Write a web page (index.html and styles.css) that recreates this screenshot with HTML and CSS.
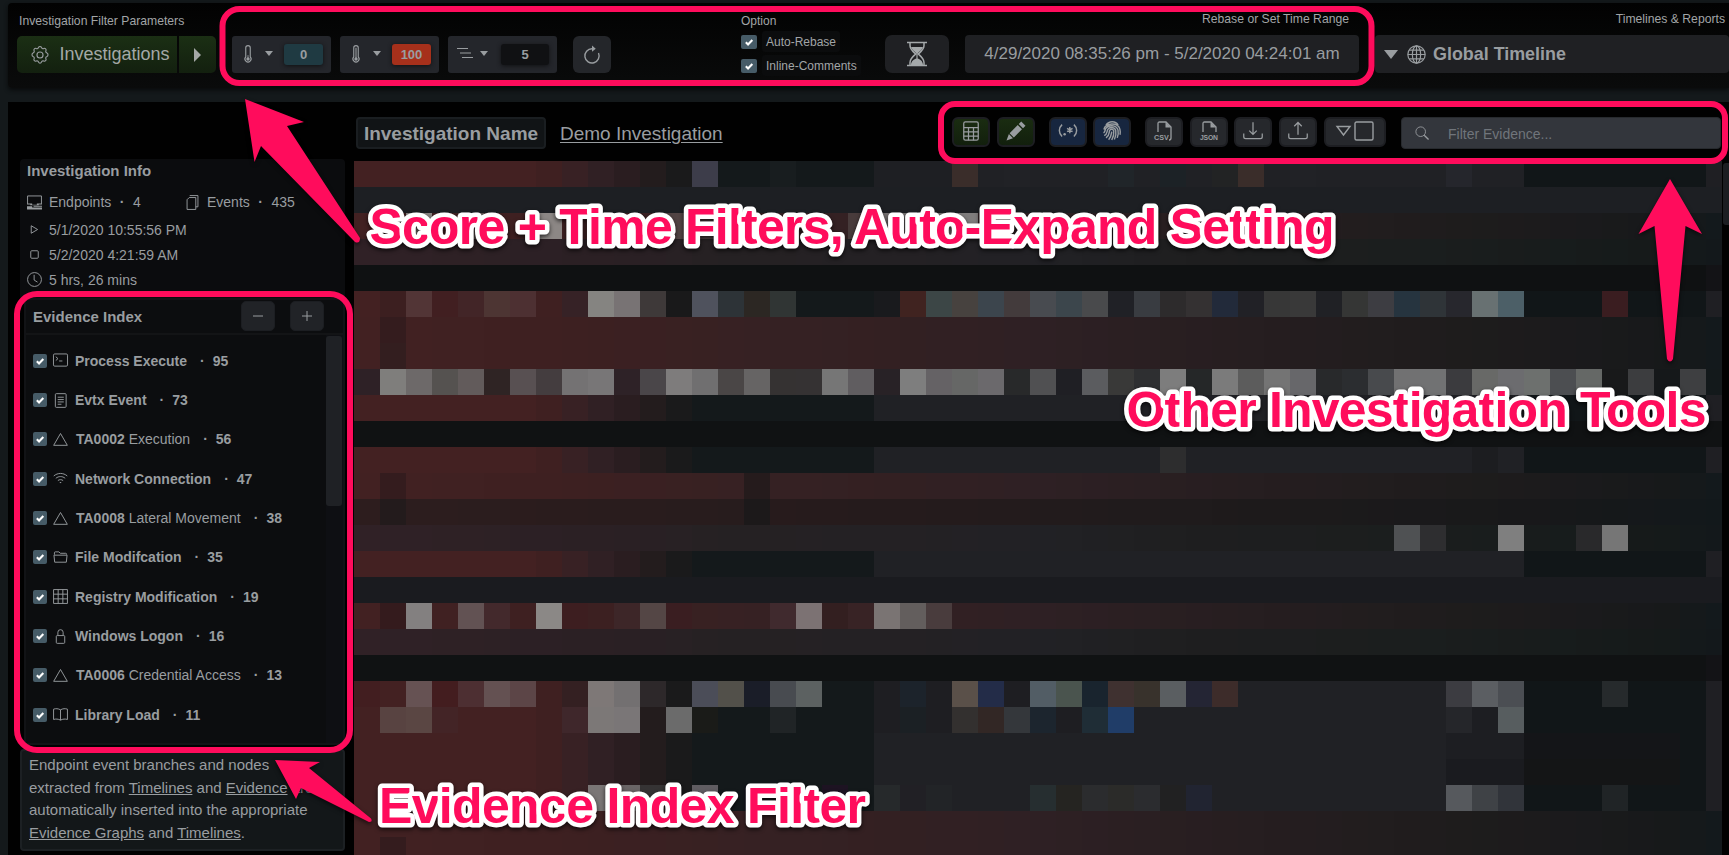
FILE: index.html
```html
<!DOCTYPE html>
<html lang="en">
<head>
<meta charset="utf-8">
<title>Demo Investigation</title>
<link rel="stylesheet" href="styles.css">
</head>
<body>
<svg class="defs" width="0" height="0">
  <symbol id="check" viewBox="0 0 16 16"><path d="M4.4 8.3l2.5 2.5 4.9-5.1" fill="none" stroke="#fff" stroke-width="2.4"/></symbol>
  <symbol id="tri" viewBox="0 0 16 16"><path d="M8 1.6L15.3 14.2H.7z"/></symbol>
</svg>

<header class="topbar">
  <div class="group group-inv">
    <div class="label">Investigation Filter Parameters</div>
    <div class="split">
      <button class="split-main">
        <svg class="icon" width="18" height="18" viewBox="0 0 16 16"><circle cx="8" cy="8" r="2.7"/><path d="M6.7 1.3C7.1.2 8.9.2 9.3 1.3c.3 1 1.2 1.4 2.1.9 1.1-.6 2.5.8 1.9 1.9-.5.9-.1 1.8.9 2.1 1.2.4 1.2 2.8 0 3.2-1 .3-1.4 1.2-.9 2.1.6 1.1-.8 2.5-1.9 1.9-.9-.5-1.8-.1-2.1.9-.4 1.2-2.2 1.2-2.600 0-.3-1-1.200-1.400-2.100-.9-1.100.6-2.500-.8-1.900-1.900.5-.9.1-1.800-.9-2.100-1.200-.4-1.200-2.800 0-3.200 1-.3 1.400-1.200.9-2.100-.6-1.100.8-2.500 1.900-1.900.9.5 1.800.1 2.100-.9z"/></svg>
        <span>Investigations</span>
      </button>
      <button class="split-more"><i class="caret-right"></i></button>
    </div>
  </div>

  <div class="filters">
    <div class="pill">
      <svg class="icon" width="18" height="18" viewBox="0 0 16 16"><path d="M6 10.500V2.500a2 2 0 0 1 4 0v8a2.700 2.700 0 1 1-4 0z"/><path d="M8 9v3" stroke-width=".8"/><circle class="solid" cx="8" cy="12.400" r="1.500"/></svg>
      <i class="caret"></i><span class="badge teal">0</span>
    </div>
    <div class="pill">
      <svg class="icon" width="18" height="18" viewBox="0 0 16 16"><path d="M6 10.500V2.500a2 2 0 0 1 4 0v8a2.700 2.700 0 1 1-4 0zM8 2.500v9"/><circle class="solid" cx="8" cy="12.400" r="1.500"/></svg>
      <i class="caret"></i><span class="badge red">100</span>
    </div>
    <div class="pill wide">
      <svg class="icon" width="16" height="16" viewBox="0 0 16 16"><path d="M0 2.500h11M3 7h11M5 11.500h11" stroke-width="1.200"/></svg>
      <i class="caret"></i><span class="badge dark">5</span>
    </div>
    <button class="reload">
      <svg class="icon" width="20" height="20" viewBox="0 0 16 16"><path d="M8 3a5.700 5.700 0 1 0 5.200 3.400" stroke-width="1.100"/><path class="solid" d="M8 .4v5L11 2.900z"/></svg>
    </button>
  </div>

  <div class="options">
    <div class="label">Option</div>
    <label class="opt"><span class="cb"><svg width="16" height="14"><use href="#check"/></svg></span><span class="opt-text">Auto-Rebase</span></label>
    <label class="opt"><span class="cb"><svg width="16" height="14"><use href="#check"/></svg></span><span class="opt-text">Inline-Comments</span></label>
  </div>

  <button class="hourglass">
    <svg width="22" height="26" viewBox="0 0 22 26" fill="none" stroke="#a4a8aa" stroke-width="1.500"><path d="M1 1.500h20M1 24.500h20M4 1.500v3c0 4 3 6 5.800 8.500C7 15.500 4 17.500 4 21.500v3M18 1.500v3c0 4-3 6-5.800 8.500C15 15.500 18 17.500 18 21.500v3"/><path d="M5 6h12c-1 3-4 4.600-5.400 6.500v5c2 .7 5.400 2.500 5.400 6.500H5c0-4 3.400-5.800 5.400-6.500v-5C9 10.600 6 9 5 6z" fill="#a4a8aa" stroke="none"/></svg>
  </button>

  <div class="range">
    <div class="label label-end">Rebase or Set Time Range</div>
    <div class="range-box"><span>4/29/2020 08:35:26 pm - 5/2/2020 04:24:01 am</span></div>
  </div>

  <div class="reports">
    <div class="label label-end">Timelines &amp; Reports</div>
    <div class="reports-box">
      <i class="caret big"></i>
      <svg class="icon" width="19" height="19" viewBox="0 0 16 16"><circle cx="8" cy="8" r="7.300"/><ellipse cx="8" cy="8" rx="3.500" ry="7.300"/><path d="M8 .7v14.600M.7 8h14.600M1.800 4.300h12.400M1.800 11.700h12.400"/></svg>
      <b>Global Timeline</b>
    </div>
  </div>
</header>

<main class="main">
  <aside class="side">
    <section class="info">
      <h3>Investigation Info</h3>
      <div class="stat">
        <svg class="icon" width="15" height="15" viewBox="0 0 16 16"><path d="M.6 9.500V1h14.800v8.500"/><path class="solid" d="M0 9h5.500v1.500h5V9H16v1H12.500v1H3.500v-1H0zM0 12h5.500v1.200H16v2.300H0zM7 11.500h9v1H7z"/></svg>
        <span class="stat-a">Endpoints<em>·</em>4</span>
        <svg class="icon copy" width="13" height="15" viewBox="0 0 13 16"><path d="M3.500.6h8.800v12H10M3 2.700h7v12.700H.7V5z"/></svg>
        <span>Events<em>·</em>435</span>
      </div>
      <div class="when"><svg class="icon" width="15" height="15" viewBox="0 0 16 16"><path d="M4.500 4v8l6.800-4z"/></svg>5/1/2020 10:55:56 PM</div>
      <div class="when"><svg class="icon" width="15" height="15" viewBox="0 0 16 16"><rect x="4" y="4" width="8" height="8" rx="1"/></svg>5/2/2020 4:21:59 AM</div>
      <div class="when"><svg class="icon" width="15" height="15" viewBox="0 0 16 16"><circle cx="8" cy="8" r="7.400"/><path d="M7.600 3v5.600l3.600 2.200"/></svg>5 hrs, 26 mins</div>
    </section>

    <section class="index">
      <div class="index-head">
        <h3>Evidence Index</h3>
        <button><svg class="icon" width="12" height="12" viewBox="0 0 12 12"><path d="M1 6h10"/></svg></button>
        <button><svg class="icon" width="12" height="12" viewBox="0 0 12 12"><path d="M1 6h10M6 1v10"/></svg></button>
      </div>
      <div class="index-body">
        <ul class="list">
          <li><span class="cb"><svg width="14" height="14"><use href="#check"/></svg></span><svg class="icon" width="15" height="15" viewBox="0 0 16 16"><rect x=".5" y="1" width="15" height="13" rx="1.300"/><path d="M3 4l2.300 2L3 8M6.500 8.500H10"/></svg><b>Process Execute</b><em>·</em><b>95</b></li>
          <li><span class="cb"><svg width="14" height="14"><use href="#check"/></svg></span><svg class="icon" width="15" height="15" viewBox="0 0 16 16"><rect x="2.500" y=".7" width="11.500" height="14.600" rx="1"/><path d="M5 4.500h6.500M5 7h6.500M5 9.500h6.500M5 12h4"/></svg><b>Evtx Event</b><em>·</em><b>73</b></li>
          <li class="ta"><span class="cb"><svg width="14" height="14"><use href="#check"/></svg></span><svg class="icon" width="15" height="15"><use href="#tri"/></svg><b>TA0002</b>&nbsp;Execution<em>·</em><b>56</b></li>
          <li><span class="cb"><svg width="14" height="14"><use href="#check"/></svg></span><svg class="icon" width="15" height="15" viewBox="0 0 16 16"><path d="M.8 5.300c4.200-3.600 10.200-3.600 14.400 0M3 7.800c3-2.500 7-2.500 10 0M5.200 10.200c1.700-1.300 3.900-1.300 5.600 0"/><path class="solid" d="M6.800 11.800h2.400L8 13z"/></svg><b>Network Connection</b><em>·</em><b>47</b></li>
          <li class="ta"><span class="cb"><svg width="14" height="14"><use href="#check"/></svg></span><svg class="icon" width="15" height="15"><use href="#tri"/></svg><b>TA0008</b>&nbsp;Lateral Movement<em>·</em><b>38</b></li>
          <li><span class="cb"><svg width="14" height="14"><use href="#check"/></svg></span><svg class="icon" width="15" height="15" viewBox="0 0 16 16"><path d="M1.500 5V3c0-.6.3-1 1-1h3.700l1.700 1.500h5.600c.7 0 1 .4 1 1V5M1 5.500h14l-.8 7.500H1.800z"/></svg><b>File Modifcation</b><em>·</em><b>35</b></li>
          <li><span class="cb"><svg width="14" height="14"><use href="#check"/></svg></span><svg class="icon" width="15" height="15" viewBox="0 0 16 16"><path d="M.6.6h14.800v14.800H.6zM5.500.6v14.800M10.500.6v14.800M.6 5.500h14.800M.6 10.500h14.800"/></svg><b>Registry Modification</b><em>·</em><b>19</b></li>
          <li><span class="cb"><svg width="14" height="14"><use href="#check"/></svg></span><svg class="icon" width="15" height="15" viewBox="0 0 16 16"><rect x="3.500" y="7" width="9" height="8.300" rx="1"/><path d="M5.200 7V3.500a2.800 2.800 0 0 1 5.600 0V7"/></svg><b>Windows Logon</b><em>·</em><b>16</b></li>
          <li class="ta"><span class="cb"><svg width="14" height="14"><use href="#check"/></svg></span><svg class="icon" width="15" height="15"><use href="#tri"/></svg><b>TA0006</b>&nbsp;Credential Access<em>·</em><b>13</b></li>
          <li><span class="cb"><svg width="14" height="14"><use href="#check"/></svg></span><svg class="icon" width="15" height="15" viewBox="0 0 16 16"><path d="M8 3C5.500 1.600 3 1.500.6 2.300v11C3 12.600 5.500 12.700 8 14c2.500-1.300 5-1.400 7.400-.7v-11C13 1.500 10.500 1.600 8 3zM8 3v11"/></svg><b>Library Load</b><em>·</em><b>11</b></li>
        </ul>
        <div class="track"><div class="thumb"></div></div>
      </div>
    </section>

    <section class="note">Endpoint event branches and nodes<br>extracted from <u>Timelines</u> and <u>Evidence</u> are<br>automatically inserted into the appropriate<br><u>Evidence Graphs</u> and <u>Timelines</u>.</section>
  </aside>

  <section class="content">
    <div class="content-head">
      <div class="title">
        <span class="name-box">Investigation Name</span>
        <u class="name">Demo Investigation</u>
      </div>
      <div class="tools">
        <button class="tool green"><svg class="icon" width="20" height="20" viewBox="0 0 16 16"><rect x="2.200" y=".7" width="11.600" height="14.600" rx="1.300"/><path d="M2.200 5.300h11.600M2.200 8.600h11.600M2.200 12h11.600M6 5.300v10M10 5.300v10"/></svg></button>
        <button class="tool green"><svg class="icon" width="20" height="20" viewBox="0 0 16 16"><path class="solid" d="M12.200.4l3.400 3.400-2 2L10.200 2.400zM9.400 3.200l3.400 3.400-6.500 6.500-3.400-3.400zM2.300 10.400L5.600 13.700.4 15.600z"/></svg></button>
        <button class="tool blue gap-a"><svg class="icon" width="20" height="20" viewBox="0 0 22 20"><path d="M4.500 3C.5 6.500.5 12.500 4.500 16M17.500 3c4 3.500 4 9.500 0 13M13 5.500v7M10 7.200l6 3.600M10 10.800l6-3.600" stroke-width="1.600"/><circle class="solid" cx="7.300" cy="13.500" r="1.400"/></svg></button>
        <button class="tool blue gap-b"><svg class="icon" width="20" height="20" viewBox="0 0 16 16"><g stroke-width="1.150"><path d="M3.200 3.300C5.500-.3 11-.2 12.900 3.200M1.500 6.800C2.700 1.300 12.800.8 14.300 6.500c.4 1.500.4 3 .1 4.500M1.200 9.500C2.600 8.800 2.200 7.500 2.900 6.200 4.700 2.800 11.600 2.900 12.800 7.300c.5 2.200.1 4.300-.6 6.200M1.800 11.700C4.500 10.500 3.700 8.500 4.600 6.800c1.500-2.500 5.700-2.100 6.400.9.500 2.600-.1 5-1.100 7.100M3.200 13.500c3-1.800 2.300-4.200 2.900-5.900.6-1.500 3-1.200 3.300.4.300 2.300-.4 4.900-1.600 7.200M5.300 15c2.200-2.200 2.200-4.700 2.500-6.500"/></g></svg></button>
        <button class="tool gap-a"><svg class="icon" width="20" height="20" viewBox="0 0 20 20"><path d="M4 11V2.500C4 1.500 4.500 1 5.500 1H12l5 5v11c0 1.200-.8 2-2 2" stroke-width="1.300"/><path class="solid" d="M11.500 1v5.500H17z"/><text x="0" y="18.600" font-size="7.200">CSV</text></svg></button>
        <button class="tool"><svg class="icon" width="20" height="20" viewBox="0 0 20 20"><path d="M4 11V2.500C4 1.500 4.500 1 5.500 1H12l5 5v5" stroke-width="1.300"/><path class="solid" d="M11.500 1v5.500H17z"/><text x="1" y="18.600" font-size="6.800" textLength="18">JSON</text></svg></button>
        <button class="tool gap-b"><svg class="icon" width="20" height="20" viewBox="0 0 16 16"><path d="M.6 10v2.500c0 1 .6 1.500 1.500 1.500h11.800c.9 0 1.500-.6 1.500-1.500V10M8 1v9.500M5 7.700l3 3 3-3"/></svg></button>
        <button class="tool"><svg class="icon" width="20" height="20" viewBox="0 0 16 16"><path d="M.6 10v2.500c0 1 .6 1.500 1.500 1.500h11.800c.9 0 1.500-.6 1.500-1.500V10M8 11V1.300M5 4.200l3-3 3 3"/></svg></button>
        <button class="tool pair"><svg class="icon" width="38" height="20" viewBox="0 0 38 20"><path d="M1 5.500h13L7.500 14z" stroke-width="1.400"/><rect x="19" y="1" width="18" height="18" rx="1.500" stroke-width="1.400"/></svg></button>
      </div>
      <div class="search">
        <svg class="icon" width="14" height="14" viewBox="0 0 16 16"><circle cx="6.500" cy="6.500" r="5.500"/><path d="M10.500 10.500l5 5" stroke-width="1.600"/></svg>
        <span>Filter Evidence...</span>
      </div>
    </div>
    <div class="content-body">
      <div class="mosaic" id="mosaic"></div>
      <div class="page-thumb"></div>
    </div>
  </section>
</main>

<svg class="notes" width="1729" height="855" viewBox="0 0 1729 855">
  <g class="frames">
    <rect x="222.500" y="9" width="1149" height="74" rx="17"/>
    <rect x="941" y="104" width="784" height="57" rx="14"/>
    <rect x="17" y="294" width="333" height="456" rx="20"/>
  </g>
  <g class="arrows">
    <path d="M245 99L304 122 287 126 360 238Q360 244 355 242L261 146 254.500 162z"/>
    <path d="M1670 179L1702 234 1685.500 226 1673 359Q1670 364 1667 359L1654.500 226 1638.500 234z"/>
    <path d="M275 760L320 762 309 768 371 818.500Q373 822 369 822L301 788 296 799z"/>
  </g>
  <g class="captions">
    <text x="369.500" y="244" textLength="965">Score + Time Filters, Auto-Expand Setting</text>
    <text x="1126.500" y="427" textLength="580">Other Investigation Tools</text>
    <text x="379" y="823" textLength="487">Evidence Index Filter</text>
  </g>
</svg>
<script src="mosaic.js"></script>
</body>
</html>
```

FILE: styles.css
```css
* { box-sizing: border-box; }
body { margin: 0; width: 1729px; height: 855px; overflow: hidden; background: #14191b; color: #999da0; font-family: "Liberation Sans", Arial, sans-serif; font-size: 14px; }
button { display: flex; align-items: center; justify-content: center; padding: 0; border: 0; background: none; color: inherit; font: inherit; }
h3 { margin: 0; font-size: 15px; line-height: 18px; white-space: nowrap; }
em { font-style: normal; font-weight: bold; }
.defs { position: absolute; }
.icon { flex: none; fill: none; stroke: #999da0; stroke-width: 1; overflow: visible; }
.icon .solid { fill: #999da0; stroke: none; }
.icon text { fill: #999da0; stroke: none; font-weight: bold; }

.topbar { display: flex; align-items: flex-start; height: 85px; margin: 3px 0 0 8px; background: linear-gradient(#020202, #0a0b0b); border-radius: 4px 0 0 4px; box-shadow: 0 2px 4px #080a0b; }
.label { height: 14px; font-size: 12.200px; line-height: 14px; white-space: nowrap; color: #a2a5a7; }
.label-end { text-align: right; }
.group-inv { width: 199px; margin-left: 9px; padding-top: 11px; }
.group-inv .label { padding-left: 2px; }
.split { display: flex; gap: 2px; margin-top: 8px; height: 37px; }
.split-main { gap: 10px; width: 160px; padding-left: 7px; border-radius: 5px 0 0 5px; font-size: 18px; background: linear-gradient(#1b2f14, #13200f); color: #a4a8a6; }
.split-more { flex: 1; border-radius: 0 5px 5px 0; background: linear-gradient(#1b2f14, #13200f); }
.caret-right { border: 7px solid transparent; border-left-color: #a4a8a6; border-right: 0; }
.caret { flex: none; width: 0; height: 0; border: 4px solid transparent; border-top: 5px solid #999da0; border-bottom: 0; }
.caret.big { border-width: 9px 7px 0; }
.filters { display: flex; margin-left: 16px; padding-top: 33px; }
.pill { display: flex; align-items: center; width: 99px; height: 37px; margin-right: 9px; padding: 0 8px 0 7px; border-radius: 3px; background: #24262b; }
.pill .icon { margin-top: -2px; }
.pill.wide { width: 109px; margin-right: 16px; padding-left: 9px; }
.pill .caret { margin: -2px 11px 0 8px; }
.badge { flex: 1; height: 21px; border-radius: 3px; font-size: 13px; font-weight: bold; line-height: 21px; text-align: center; box-shadow: 0 1px 4px #101113; }
.teal { background: #1f3a42; }
.red { background: #a6301b; }
.dark { background: #101113; }
.pill.wide .caret { margin: -2px 13px 0 7px; }
.reload { width: 38px; height: 37px; border-radius: 6px; background: #24262a; }
.options { width: 144px; margin-left: 130px; padding-top: 11px; }
.options .label { font-size: 12px; }
.opt { display: flex; align-items: center; gap: 5px; height: 21px; margin-top: 3px; font-size: 12px; }
.opt-text { padding: 1px 4px 0; line-height: 20px; background: #0b0c0d; border-radius: 3px; white-space: nowrap; color: #a2a5a7; }
.cb { flex: none; display: flex; border-radius: 2px; background: #465b67; }
.hourglass { width: 64px; height: 38px; margin-top: 32px; border-radius: 7px; background: #1f2023; }
.range { width: 394px; margin-left: 16px; padding-top: 9px; }
.range .label { padding-right: 10px; }
.range-box { display: flex; align-items: center; justify-content: center; height: 38px; margin-top: 9px; border-radius: 4px; background: #1f2023; font-size: 17px; white-space: nowrap; }
.reports { flex: 1; margin-left: 16px; padding-top: 9px; }
.reports .label { padding-right: 4px; }
.reports-box { display: flex; align-items: center; height: 38px; margin-top: 9px; padding-left: 9px; background: #1f2023; border-radius: 4px; font-size: 17.900px; }
.reports-box .icon { margin: 0 7px 0 9px; }

.main { display: grid; grid-template-columns: 346px 1fr; height: 753px; margin: 14px 0 0 8px; background: #010101; }
.side { padding: 57px 9px 0 12px; }
.info { height: 140px; padding: 3px 7px 0; background: #0b0c0e; border-radius: 4px; }
.stat { display: flex; align-items: center; height: 16px; margin: 14px 0 7px; }
.stat .icon { margin-right: 7px; }
.stat .copy { margin-right: 8px; }
.stat-a { width: 137px; }
.stat em { margin: 0 8.500px; }
.when { display: flex; align-items: center; gap: 7px; height: 25px; }
.index { margin: -1px 0 0 4px; border: 2px solid #121316; background: #0c0d0f; }
.index-head { display: flex; align-items: center; height: 35px; padding-left: 7px; border-bottom: 2px solid #131416; }
.index-head h3 { width: 208px; }
.index-head button { width: 34px; height: 30px; margin: -1px 15px 0 0; border: 1px solid #1c1e22; border-radius: 5px; background: #212327; }
.index-body { display: flex; height: 408px; }
.list { flex: 1; margin: 0; padding: 6px 0 0 7px; list-style: none; }
.list li { display: flex; align-items: center; height: 39.350px; white-space: nowrap; }
.list .icon { margin: 0 7px 0 6px; }
.list .ta .icon { margin-right: 8px; }
.list em { margin: 0 8px 0 13px; }
.track { width: 17px; background: #0e0f13; }
.thumb { width: 16px; height: 170px; margin-top: 1px; border-radius: 3px; background: #1f2125; }
.note { height: 102px; margin-top: 4px; padding: 3px 0 0 7px; border: 2px solid #1c2023; border-radius: 4px; background: #131719; font-size: 15px; line-height: 22.600px; white-space: nowrap; }

.content { min-width: 0; }
.content-head { display: flex; align-items: flex-start; height: 59px; padding-top: 15px; }
.title { display: flex; align-items: center; width: 598px; height: 32px; padding-left: 2px; font-size: 19px; }
.name-box { width: 190px; height: 32px; border: 2px solid #1a1e21; border-radius: 4px; background: #111416; font-weight: bold; line-height: 29px; text-align: center; white-space: nowrap; }
.name { margin-left: 14px; padding-top: 1px; text-underline-offset: 2px; text-decoration-thickness: 1px; }
.tools { display: flex; }
.tool { width: 38px; height: 30px; margin-right: 7px; border: 2px solid #1d1e22; border-radius: 6px; background: #26282c; }
.tool .icon { margin-top: -2px; }
.tool.green { background: linear-gradient(#1a2c11, #121f0d); }
.tool.blue { background: #17263f; }
.tool.gap-a { margin-left: 7px; }
.tool.blue.gap-a { margin-right: 6px; }
.tool.gap-b { margin-left: 0; }
.tool:nth-child(6) { margin-right: 6px; }
.tool.pair { width: 62px; margin-right: 15px; }
.search { display: flex; align-items: center; gap: 19px; width: 320px; height: 32px; padding-left: 13px; border: 1px solid #272a2e; border-radius: 4px; background: #33363c; color: #70757b; font-size: 14px; }
.search span { padding-top: 2px; }
.content-body { display: flex; }
.mosaic { display: grid; grid-template-columns: repeat(52, 26px) 16px; grid-auto-rows: 26px; width: 1368px; height: 694px; overflow: hidden; }
.page-thumb { width: 6px; height: 62px; margin: 2px 0 0 1px; border-radius: 3px 0 0 3px; background: #1c1e22; }

.notes { position: absolute; left: 0; top: 0; pointer-events: none; }
.frames { fill: none; stroke: #ff0c5c; stroke-width: 6; }
.arrows { fill: #ff0c5c; filter: drop-shadow(0 2px 2px rgba(0, 0, 0, .6)); }
.captions { font-size: 50px; font-weight: bold; fill: #ff0c5c; stroke: #fff; stroke-width: 9; stroke-linejoin: round; paint-order: stroke; filter: drop-shadow(0 2px 2px rgba(0, 0, 0, .7)); }
```

FILE: mosaic.js
```js
// Row backgrounds as [column, colour] stops; smooth ones blend between stops.
const COLS = 53;
const redShort = [[0,'432122'],[7,'3f2021'],[8,'382124'],[9,'302024'],[10,'2a1d20'],[11,'231c1d'],[12,'1a1a1b'],[13,'14191b'],[20,'202125'],[45,'111618'],[52,'1f1f23']];
const redLong = [[0,'422122'],[8,'3d2021'],[16,'352123'],[20,'332022'],[26,'2e2024'],[33,'271e20'],[36,'241d1f'],[42,'1e1c1c'],[46,'1b1a1c'],[50,'17191a'],[52,'13191c']];
const redDim = [[0,'2d1d1e'],[10,'291c1d'],[20,'251b1c'],[28,'211b1c'],[36,'1c1a1b'],[46,'17181a'],[52,'12181b']];
const plum = [[0,'302126'],[10,'2a2024'],[14,'252123'],[20,'242124'],[26,'212125'],[32,'1e1e1f'],[40,'1b1e1e'],[50,'151a1a'],[52,'13181b']];
const flat = c => [[0, c]];

const rows = [
  [redShort, 0, {13:'3d3d4a',16:'181d1f',20:'1e1f23',21:'1e1f23',22:'1e1f23',23:'3a2d2a',25:'212226',29:'202529',31:'1c2226',33:'222324',34:'3a2d2a',36:'212226',42:'25262c'}],
  [flat('1d1f23'), 0, {}],
  [redLong, 1, {2:'8a8583',4:'665a59',7:'8c8785',12:'524444',13:'524444',19:'483b3b',20:'777373',21:'7a7676',22:'777373',23:'7f7d7d'}],
  [plum, 1, {}],
  [flat('0f1112'), 0, {52:'131316'}],
  [redShort, 0, {1:'3c1f20',2:'523536',3:'411f21',4:'422527',5:'4d3533',6:'4d3032',8:'362226',9:'858481',10:'787374',11:'3e3939',12:'19191a',13:'4f525d',14:'2d3337',15:'2c2723',16:'303534',20:'191a1d',21:'402320',22:'3c4646',23:'47423f',24:'3c454d',25:'433b3c',26:'484b50',27:'3c464c',28:'494a4c',29:'202126',30:'393c41',31:'2d2b2c',32:'343132',33:'222a3a',34:'212126',35:'373737',36:'393939',38:'353635',39:'3d3d42',40:'26343f',41:'2f3438',42:'27272d',43:'687172',44:'4c5f67',48:'3a1d20'}],
  [redLong, 1, {1:'341c1e'}],
  [redLong, 1, {1:'331e1f'}],
  [redShort, 0, '2e2126 7f7e7c 6d6969 555250 625b5b 2f2424 585052 443d3f 747273 787677 2e2227 4a4649 7e7c7c 706f70 4a4646 666464 353232 353233 767676 605d60 282226 7e7e7e 656265 666766 6b696c 28292a 505052 1f1f24 5b5c5f 393938 2e2f31 7d7d7d 252728 7b7b7b 5c5c5c 747474 67676a 28292b 2b2d30 484a4d 717172 717273 3b3b3e 686967 6c6c6f 6d706e 4c4e51 656866 18191a 3c3d3f 15181a 3e3f41 13191b'.split(' ')],
  [redShort, 0, {}],
  [flat('101213'), 0, {}],
  [redShort, 0, {31:'2d2d2e',43:'1c1d20'}],
  [redLong, 1, {1:'341c1e',15:'251b1c'}],
  [redDim, 1, {1:'231b1c',15:'1c191a'}],
  [plum, 1, {40:'4f5153',41:'2e2e30',44:'7f7f7f',47:'29292b',48:'767676'}],
  [redShort, 0, {}],
  [flat('1a1b1f'), 0, {}],
  [redLong, 1, {1:'341b1d',2:'838080',4:'625253',5:'43292c',7:'8b8886',8:'3d1e20',10:'3d2628',11:'544645',12:'3a1e21',16:'402a2e',17:'7c7273',18:'331f20',19:'382325',20:'7a7473',21:'635e5d',22:'493c3d'}],
  [plum, 1, {}],
  [flat('101213'), 0, {52:'131316'}],
  [redShort, 0, {0:'421e20',2:'665253',3:'431d1f',4:'4d2f32',5:'645152',6:'5c4547',8:'342022',9:'7e7877',10:'737071',11:'2d282a',13:'4b4d58',14:'52504a',15:'1a1d28',16:'484b50',17:'5c6161',20:'1e1e22',21:'1c232b',22:'1e1e22',23:'5a5049',24:'232c48',25:'1e1e22',26:'525d65',27:'4a544e',28:'19242e',29:'3f3130',30:'38322c',31:'5a5e61',32:'242534',33:'3d2c2a',42:'3c3c41',43:'5b5e62',44:'4b4e53',48:'262a2c'}],
  [redShort, 0, {1:'584341',2:'5a4643',3:'432426',8:'3f272b',9:'7c7877',10:'7a7677',12:'6b6b6b',13:'1a1b18',16:'202426',20:'1e1e22',21:'1b2024',22:'1e1e22',23:'33302f',24:'322725',25:'34373b',26:'1c252e',27:'1e1e22',28:'1f2d36',29:'203d68',42:'25262a',43:'1d1e22',44:'575d5f'}],
  [redShort, 0, {42:'1d1e22',43:'1d1e22',44:'1d1e22',45:'141518',46:'141518',47:'141518',48:'141518',49:'141518',50:'141518'}],
  [redShort, 0, {42:'1a1b1f',43:'1a1b1f',44:'1a1b1f',45:'141516',46:'141516',47:'141516',48:'141516',49:'141516',50:'141516'}],
  [redShort, 0, {9:'7a7676',10:'6a6566',11:'353334',13:'605d62',15:'14161d',18:'1d1322',20:'26292b',21:'212025',22:'222427',26:'262e30',27:'252421',28:'2b2c2e',29:'2b2b29',30:'2b2c2f',31:'212122',32:'212431',42:'56595d',43:'3f4246',44:'31343a',48:'202426'}],
  [redLong, 1, {}],
  [redLong, 1, {1:'341c1e'}]
];

const rgb = h => [0, 2, 4].map(i => parseInt(h.substr(i, 2), 16));

// Steps hold their colour up to column 51; the last narrow column has its own.
function colourAt(stops, smooth, col) {
  let i = stops.length - 1;
  while (i > 0 && stops[i][0] > col) i--;
  const a = stops[i], b = stops[i + 1];
  if (!smooth || !b) return '#' + a[1];
  const t = (col - a[0]) / (b[0] - a[0]);
  const from = rgb(a[1]), to = rgb(b[1]);
  return 'rgb(' + from.map((v, k) => Math.round(v + (to[k] - v) * t)).join(',') + ')';
}

const host = document.getElementById('mosaic');
for (const [stops, smooth, cells] of rows) {
  for (let c = 0; c < COLS; c++) {
    const cell = document.createElement('div');
    cell.style.background = cells[c] ? '#' + cells[c] : colourAt(stops, smooth, c);
    host.appendChild(cell);
  }
}
```
